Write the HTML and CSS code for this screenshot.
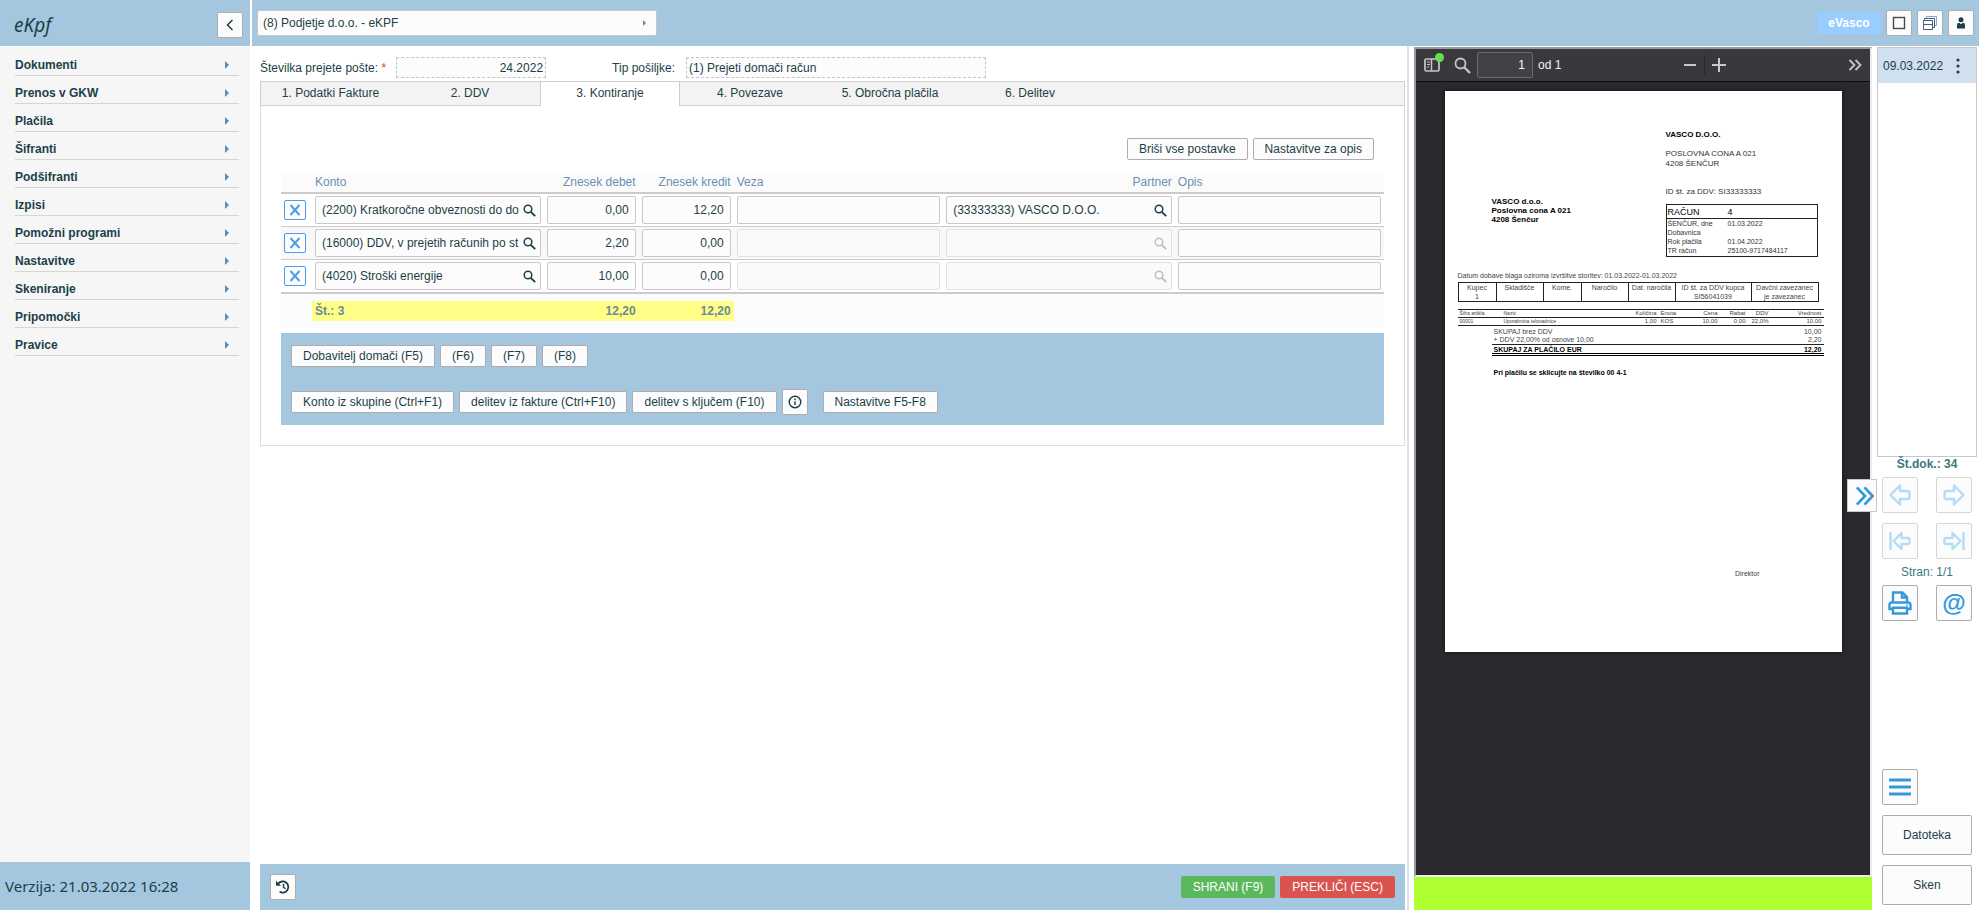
FILE: index.html
```
<!DOCTYPE html>
<html lang="sl">
<head>
<meta charset="utf-8">
<title>eKpf</title>
<link rel="stylesheet" href="styles.css">
</head>
<body>
<svg class="defs" aria-hidden="true">
  <symbol id="i-search" viewBox="0 0 13 13"><circle cx="5" cy="5" r="3.8" fill="none" stroke="currentColor" stroke-width="1.5"/><path d="M7.8 7.8L12.2 12.2" stroke="currentColor" stroke-width="1.9"/></symbol>
  <symbol id="i-x" viewBox="0 0 12 12"><path d="M1.5 1L10.500 11M10.500 1L1.500 11" fill="none" stroke="currentColor" stroke-width="1.9"/></symbol>
  <symbol id="i-tri" viewBox="0 0 4 8"><path d="M0 0L4 4L0 8Z" fill="currentColor"/></symbol>
  <symbol id="i-larrow" viewBox="0 0 24 24"><path d="M2.500 12L12 2.500V8H19.500Q21.500 8 21.500 10V14Q21.500 16 19.500 16H12V21.500Z" fill="none" stroke="currentColor" stroke-width="2.4" stroke-linejoin="round"/></symbol>
  <symbol id="i-lfirst" viewBox="0 0 24 24"><path d="M2.500 3V21M5.500 12L13.500 4V9H20Q21.500 9 21.500 10.500V13.500Q21.500 15 20 15H13.500V20Z" fill="none" stroke="currentColor" stroke-width="2.4" stroke-linejoin="round"/></symbol>
</svg>
<div class="app">
  <aside class="sidebar">
    <div class="brand">
      <span class="brand-name">eKpf</span>
      <button class="btn icon-btn" aria-label="Skrij meni"><svg width="8" height="12" viewBox="0 0 8 12"><path d="M6.500 1L1.500 6L6.500 11" fill="none" stroke="currentColor" stroke-width="1.5"/></svg></button>
    </div>
    <nav class="menu">
      <a href="#">Dokumenti<svg class="tri"><use href="#i-tri"/></svg></a>
      <a href="#">Prenos v GKW<svg class="tri"><use href="#i-tri"/></svg></a>
      <a href="#">Plačila<svg class="tri"><use href="#i-tri"/></svg></a>
      <a href="#">Šifranti<svg class="tri"><use href="#i-tri"/></svg></a>
      <a href="#">Podšifranti<svg class="tri"><use href="#i-tri"/></svg></a>
      <a href="#">Izpisi<svg class="tri"><use href="#i-tri"/></svg></a>
      <a href="#">Pomožni programi<svg class="tri"><use href="#i-tri"/></svg></a>
      <a href="#">Nastavitve<svg class="tri"><use href="#i-tri"/></svg></a>
      <a href="#">Skeniranje<svg class="tri"><use href="#i-tri"/></svg></a>
      <a href="#">Pripomočki<svg class="tri"><use href="#i-tri"/></svg></a>
      <a href="#">Pravice<svg class="tri"><use href="#i-tri"/></svg></a>
    </nav>
    <div class="version">Verzija: 21.03.2022 16:28</div>
  </aside>

  <div class="right">
    <header class="topbar">
      <div class="company">
        <select aria-label="Podjetje"><option>(8) Podjetje d.o.o. - eKPF</option></select>
        <svg class="tri small"><use href="#i-tri"/></svg>
      </div>
      <div class="top-tools">
        <button class="user-tag">eVasco</button>
        <button class="btn icon-btn" aria-label="Okno"><svg width="14" height="14" viewBox="0 0 14 14"><rect x="1.500" y="1.500" width="11" height="11" fill="none" stroke="#4c4550" stroke-width="1.4"/></svg></button>
        <button class="btn icon-btn" aria-label="Okna"><svg width="16" height="16" viewBox="0 0 16 16" fill="none" stroke="#4d5c77"><path d="M4.500 3.500V1.500H14.500V10.500H12.500" stroke="#7fa8d8"/><path d="M2.500 5.500V3.500H12.500V12.500H10.500"/><path d="M1.500 5.500H10.500V14.500H1.500ZM1.500 9.500H10.500"/></svg></button>
        <button class="btn icon-btn" aria-label="Uporabnik"><svg width="10" height="12" viewBox="0 0 10 12" fill="currentColor"><circle cx="5" cy="2.800" r="2.500"/><path d="M1 11.500V8Q1 5.800 3.200 5.800L5 7.200L6.800 5.800Q9 5.800 9 8V11.500Z"/></svg></button>
      </div>
    </header>

    <div class="work">
      <main class="content">
        <div class="form-head">
          <label for="num">Številka prejete pošte: <span class="req">*</span></label>
          <input id="num" class="ro num" value="24.2022" readonly>
          <label for="kind" class="kind-label">Tip pošiljke:</label>
          <input id="kind" class="ro kind" value="(1) Prejeti domači račun" readonly>
        </div>
        <div class="tabs" role="tablist">
          <button role="tab">1. Podatki Fakture</button>
          <button role="tab">2. DDV</button>
          <button role="tab" aria-selected="true" class="active">3. Kontiranje</button>
          <button role="tab">4. Povezave</button>
          <button role="tab">5. Obročna plačila</button>
          <button role="tab">6. Delitev</button>
          <span class="tab-rest"></span>
        </div>
        <section class="panel">
          <div class="panel-tools">
            <button class="btn">Briši vse postavke</button>
            <button class="btn">Nastavitve za opis</button>
          </div>
          <table class="postings">
            <colgroup><col class="c-del"><col class="c-wide"><col class="c-amt"><col class="c-amt"><col class="c-veza"><col class="c-wide"><col></colgroup>
            <thead><tr><th></th><th>Konto</th><th class="r">Znesek debet</th><th class="r">Znesek kredit</th><th>Veza</th><th class="r">Partner</th><th>Opis</th></tr></thead>
            <tbody>
              <tr>
                <td><button class="del" aria-label="Briši"><svg width="12" height="12"><use href="#i-x"/></svg></button></td>
                <td><div class="lookup"><input aria-label="Konto" value="(2200) Kratkoročne obveznosti do do"><svg class="mag"><use href="#i-search"/></svg></div></td>
                <td><input class="cell r" aria-label="Znesek debet" value="0,00"></td>
                <td><input class="cell r" aria-label="Znesek kredit" value="12,20"></td>
                <td><input class="cell" aria-label="Veza"></td>
                <td><div class="lookup"><input aria-label="Partner" value="(33333333) VASCO D.O.O."><svg class="mag"><use href="#i-search"/></svg></div></td>
                <td><input class="cell" aria-label="Opis"></td>
              </tr>
              <tr>
                <td><button class="del" aria-label="Briši"><svg width="12" height="12"><use href="#i-x"/></svg></button></td>
                <td><div class="lookup"><input aria-label="Konto" value="(16000) DDV, v prejetih računih po st"><svg class="mag"><use href="#i-search"/></svg></div></td>
                <td><input class="cell r" aria-label="Znesek debet" value="2,20"></td>
                <td><input class="cell r" aria-label="Znesek kredit" value="0,00"></td>
                <td><input class="cell" aria-label="Veza" disabled></td>
                <td><div class="lookup off"><input aria-label="Partner" disabled><svg class="mag"><use href="#i-search"/></svg></div></td>
                <td><input class="cell" aria-label="Opis"></td>
              </tr>
              <tr>
                <td><button class="del" aria-label="Briši"><svg width="12" height="12"><use href="#i-x"/></svg></button></td>
                <td><div class="lookup"><input aria-label="Konto" value="(4020) Stroški energije"><svg class="mag"><use href="#i-search"/></svg></div></td>
                <td><input class="cell r" aria-label="Znesek debet" value="10,00"></td>
                <td><input class="cell r" aria-label="Znesek kredit" value="0,00"></td>
                <td><input class="cell" aria-label="Veza" disabled></td>
                <td><div class="lookup off"><input aria-label="Partner" disabled><svg class="mag"><use href="#i-search"/></svg></div></td>
                <td><input class="cell" aria-label="Opis"></td>
              </tr>
            </tbody>
            <tfoot><tr><td></td><td><div class="sum">Št.: 3</div></td><td><div class="sum r">12,20</div></td><td><div class="sum r">12,20</div></td><td></td><td></td><td></td></tr></tfoot>
          </table>
          <div class="actions">
            <div class="action-row">
              <button class="btn">Dobavitelj domači (F5)</button>
              <button class="btn">(F6)</button>
              <button class="btn">(F7)</button>
              <button class="btn">(F8)</button>
            </div>
            <div class="action-row">
              <button class="btn">Konto iz skupine (Ctrl+F1)</button>
              <button class="btn">delitev iz fakture (Ctrl+F10)</button>
              <button class="btn">delitev s ključem (F10)</button>
              <button class="btn icon-btn" aria-label="Info"><svg width="14" height="14" viewBox="0 0 14 14"><circle cx="7" cy="7" r="5.800" fill="none" stroke="currentColor" stroke-width="1.400"/><path d="M7 6.200V10" stroke="currentColor" stroke-width="1.400"/><circle cx="7" cy="4.300" r="0.900" fill="currentColor"/></svg></button>
              <button class="btn f-settings">Nastavitve F5-F8</button>
            </div>
          </div>
        </section>
        <footer class="save-bar">
          <button class="btn icon-btn" aria-label="Zgodovina"><svg width="16" height="16" viewBox="0 0 16 16"><path d="M3.300 4.600A5.600 5.600 0 1 1 4.600 12.700" fill="none" stroke="currentColor" stroke-width="1.800"/><path d="M1 1.700V6.700H6Z" fill="currentColor"/><path d="M8.500 4.800V8.200L10.600 9.800" fill="none" stroke="currentColor" stroke-width="1.400"/></svg></button>
          <span class="grow"></span>
          <button class="save ok">SHRANI (F9)</button>
          <button class="save no">PREKLIČI (ESC)</button>
        </footer>
      </main>

      <section class="viewer">
        <div class="pdf">
          <div class="pdf-bar">
            <button class="side-toggle" aria-label="Stranska vrstica"><svg width="16" height="16" viewBox="0 0 16 16" fill="none" stroke="currentColor"><rect x="1" y="2" width="14" height="12" rx="1.500" stroke-width="1.700"/><path d="M7.500 2V14" stroke-width="1.500"/><path d="M3 5H6M3 7.500H6M3 10H5"/></svg><i class="dot"></i></button>
            <button aria-label="Najdi"><svg width="17" height="17" viewBox="0 0 17 17" fill="none" stroke="currentColor"><circle cx="6.500" cy="6.500" r="5" stroke-width="1.800"/><path d="M10.200 10.200L16 16" stroke-width="2.200"/></svg></button>
            <input aria-label="Stran" value="1"><span class="of">od 1</span>
            <span class="zoomers">
              <button aria-label="Pomanjšaj"><svg width="14" height="14" viewBox="0 0 14 14"><path d="M1 7H13" stroke="currentColor" stroke-width="2"/></svg></button>
              <i class="sep"></i>
              <button aria-label="Povečaj"><svg width="14" height="14" viewBox="0 0 14 14"><path d="M0 7H14M7 0V14" stroke="currentColor" stroke-width="2"/></svg></button>
            </span>
            <button class="more" aria-label="Več"><svg width="14" height="12" viewBox="0 0 14 12" fill="none" stroke="currentColor" stroke-width="1.800"><path d="M1.500 1L6.500 6L1.500 11M7.500 1L12.500 6L7.500 11"/></svg></button>
          </div>
          <div class="pdf-area">
            <article class="page">
              <div class="inv-head">
                <address class="buyer"><b>VASCO d.o.o.<br>Poslovna cona A 021<br>4208 Šenčur</b></address>
                <div class="seller">
                  <b>VASCO D.O.O.</b>
                  <p class="addr">POSLOVNA CONA A 021<br>4208 ŠENČUR</p>
                  <p class="vat">ID št. za DDV: SI33333333</p>
                  <dl class="inv-box">
                    <dt class="big">RAČUN</dt><dd class="big">4</dd>
                    <dt>ŠENČUR, dne</dt><dd>01.03.2022</dd>
                    <dt>Dobavnica</dt><dd></dd>
                    <dt>Rok plačila</dt><dd>01.04.2022</dd>
                    <dt>TR račun</dt><dd>25100-9717484117</dd>
                  </dl>
                </div>
              </div>
              <p class="supply">Datum dobave blaga oziroma izvršitve storitev: 01.03.2022-01.03.2022</p>
              <table class="info">
                <colgroup><col class="i1"><col class="i2"><col class="i1"><col class="i2"><col class="i2"><col class="i3"><col></colgroup>
                <tr><td>Kupec<br>1</td><td>Skladišče</td><td>Kome.</td><td>Naročilo</td><td>Dat. naročila</td><td>ID št. za DDV kupca<br>SI56041039</td><td>Davčni zavezanec<br>je zavezanec</td></tr>
              </table>
              <table class="items">
                <colgroup><col class="t1"><col><col class="t3"><col class="t4"><col class="t5"><col class="t6"><col class="t4"><col class="t8"></colgroup>
                <tr><td class="xs">Šifra artikla</td><td class="xs">Naziv</td><td class="r">Količina</td><td>Enota</td><td class="r">Cena</td><td class="r">Rabat</td><td class="r">DDV</td><td class="r">Vrednost</td></tr>
                <tr><td class="xs">00001</td><td class="xs">Uporabnina telovadnice</td><td class="r">1,00</td><td>KOS</td><td class="r">10,00</td><td class="r">0,00</td><td class="r">22,0%</td><td class="r">10,00</td></tr>
              </table>
              <div class="totals">
                <p><span>SKUPAJ brez DDV</span><span>10,00</span></p>
                <p><span>+ DDV 22,00% od osnove 10,00</span><span>2,20</span></p>
                <p class="grand"><span>SKUPAJ ZA PLAČILO EUR</span><span>12,20</span></p>
              </div>
              <p class="ref">Pri plačilu se sklicujte na številko 00 4-1</p>
              <p class="sign">Direktor</p>
            </article>
          </div>
        </div>
        <div class="status"></div>
      </section>

      <aside class="docs">
        <div class="doc-list"><div class="doc-row"><span>09.03.2022</span><button aria-label="Možnosti"><svg width="4" height="18" viewBox="0 0 4 18" fill="currentColor"><circle cx="2" cy="3" r="1.600"/><circle cx="2" cy="9" r="1.600"/><circle cx="2" cy="15" r="1.600"/></svg></button></div></div>
        <div class="doc-count">Št.dok.: 34</div>
        <div class="nav-grid">
          <button class="btn sq" disabled aria-label="Nazaj"><svg width="24" height="24"><use href="#i-larrow"/></svg></button>
          <button class="btn sq" disabled aria-label="Naprej"><svg class="flip" width="24" height="24"><use href="#i-larrow"/></svg></button>
          <button class="btn sq" disabled aria-label="Prvi"><svg width="24" height="24"><use href="#i-lfirst"/></svg></button>
          <button class="btn sq" disabled aria-label="Zadnji"><svg class="flip" width="24" height="24"><use href="#i-lfirst"/></svg></button>
        </div>
        <div class="doc-page">Stran: 1/1</div>
        <div class="nav-grid">
          <button class="btn sq" aria-label="Tiskaj"><svg width="24" height="24" viewBox="0 0 24 24" fill="none" stroke="currentColor" stroke-width="2.400"><path d="M5 11V1.500H14.500L19 6V11M14 1.500V6.500H19"/><path d="M5 18H1.500V14Q1.500 11.500 4 11.500H20Q22.500 11.500 22.500 14V18H19"/><path d="M5 16.800H19V22.500H5Z"/><circle cx="19" cy="14.200" r="0.500" stroke-width="1"/></svg></button>
          <button class="btn sq at" aria-label="E-pošta">@</button>
        </div>
        <button class="btn expand" aria-label="Razširi"><svg width="20" height="20" viewBox="0 0 20 20" fill="none" stroke="currentColor" stroke-width="2.800"><path d="M2 1L10.500 10L2 19M10 1L18.500 10L10 19"/></svg></button>
        <span class="grow"></span>
        <button class="btn sq" aria-label="Meni"><svg width="22" height="18" viewBox="0 0 22 18" stroke="currentColor" stroke-width="3"><path d="M0 2H22M0 9H22M0 16H22"/></svg></button>
        <button class="btn wide">Datoteka</button>
        <button class="btn wide">Sken</button>
      </aside>
    </div>
  </div>
</div>
</body>
</html>
```
FILE: styles.css
```
* { box-sizing: border-box; }
body { margin: 0; font: 12px/14px "Liberation Sans", Arial, sans-serif; color: #1c3f48; background: #fff; }
button, input, select { font: inherit; color: inherit; }
button { cursor: pointer; padding: 0; border: 0; background: none; }
p, dl, dd { margin: 0; }
svg { display: block; }
.defs { position: absolute; width: 0; height: 0; }
.grow { flex: 1; }
.r { text-align: right; }

.app { display: flex; height: 100vh; gap: 2px; }
.sidebar { flex: none; width: 250px; display: flex; flex-direction: column; background: #f6f6f6; }
.brand { height: 46px; padding: 3px 7px 0 14px; display: flex; align-items: center; justify-content: space-between; background: #a4c7df; }
.brand-name { font: italic 19px/24px "Noto Sans", sans-serif; }
.btn { display: inline-flex; align-items: center; justify-content: center; height: 22px; padding: 0 11px; background: #fcfcfc; border: 1px solid #adadad; border-radius: 2px; white-space: nowrap; }
.icon-btn { width: 26px; height: 26px; padding: 0; }
.menu { flex: 1; padding: 1px 11px 0 15px; display: flex; flex-direction: column; border-top: 1px solid #fff; }
.menu a { height: 28px; padding: 7px 10px 0 0; display: flex; align-items: center; justify-content: space-between; border-bottom: 1px solid #d6d6d6; color: inherit; text-decoration: none; font-weight: bold; }
.tri { width: 4px; height: 8px; color: #5f8ab5; flex: none; }
.tri.small { height: 6px; width: 3px; }
.version { height: 48px; padding-left: 5px; background: #a4c7df; font: 15px/48px "Noto Sans", sans-serif; }

.right { flex: 1; min-width: 0; display: flex; flex-direction: column; }
.topbar { height: 46px; padding: 0 5px; display: flex; align-items: center; justify-content: space-between; background: #a4c7df; }
.company { display: flex; align-items: center; width: 400px; height: 26px; padding-right: 10px; background: #fcfcfc; border: 1px solid #c8c8c8; border-radius: 2px; }
.company select { flex: 1; height: 24px; padding: 0 5px; border: 0; background: none; appearance: none; }
.top-tools { display: flex; align-items: center; gap: 5px; }
.user-tag { width: 64px; height: 22px; background: #99ccff; color: #fff; font-weight: bold; }

.work { flex: 1; min-height: 0; display: flex; }
.content { flex: 1145 1 0; min-width: 0; padding: 11px 2px 0 8px; display: flex; flex-direction: column; border-right: 2px solid #d3e4f0; }
.form-head { display: flex; align-items: center; height: 21px; margin-bottom: 3px; }
.req { color: #e04040; }
.ro { height: 21px; border: 1px dashed #c4c4c4; background: #fcfcfc; padding: 0 2px; }
.ro.num { width: 150px; margin-left: 10px; text-align: right; }
.kind-label { margin-left: 66px; }
.ro.kind { width: 300px; margin-left: 11px; }
.tabs { display: flex; height: 25px; border: 1px solid #cfcfcf; border-bottom: 0; background: #f3f3f3; }
.tabs button { width: 140px; padding-bottom: 2px; border-bottom: 1px solid #cfcfcf; }
.tabs button:first-child { width: 139px; }
.tabs .active { background: #fff; border: 1px solid #cfcfcf; border-width: 0 1px; }
.tab-rest { flex: 1; border-bottom: 1px solid #cfcfcf; }
.panel { padding: 32px 20px 20px; border: 1px solid #dcdcdc; border-top: 0; }
.panel-tools { display: flex; justify-content: flex-end; gap: 5px; padding: 0 10px 12px 0; }

.postings { width: 100%; table-layout: fixed; border-collapse: separate; border-spacing: 0; }
.c-del { width: 31px; }
.c-wide { width: 21%; }
.c-amt { width: 95px; }
.c-veza { width: 19%; }
.postings th { height: 22px; padding: 0 3px; background: #fbfbfb; border-bottom: 2px solid #cccccc; color: #6d8fb0; font-weight: normal; text-align: left; }
.postings th.r { text-align: right; }
.postings tbody td { height: 33px; padding: 2px 3px; border-bottom: 1px solid #cccccc; }
.postings tbody tr:nth-child(2) { background: #f8f8f8; }
.postings tbody tr:last-child td { border-bottom-width: 2px; }
.cell, .lookup { display: flex; align-items: center; width: 100%; height: 28px; padding: 0 6px; background: #fcfcfc; border: 1px solid #c8c8c8; border-radius: 2px; }
.cell:disabled, .lookup.off { border-color: #e2e2e2; background: #fafafa; }
.lookup { padding-right: 4px; }
.lookup input { flex: 1; min-width: 0; padding: 0; border: 0; background: none; }
.mag { width: 13px; height: 13px; flex: none; }
.off .mag { opacity: .3; }
.del { display: flex; align-items: center; justify-content: center; width: 22px; height: 20px; border: 1px solid #4d9ae8; border-radius: 2px; background: #fcfcfc; color: #4d9ae8; }
.postings tfoot td { height: 34px; padding: 0; background: #fcfcfc; }
.sum { height: 20px; padding: 3px; background: #ffff88; color: #6a8a98; font-weight: bold; }
.actions { margin-top: 5px; padding: 10px; display: flex; flex-direction: column; gap: 20px; background: #a4c7df; }
.action-row { display: flex; align-items: center; gap: 5px; height: 26px; }
.f-settings { margin-left: 10px; }
.save-bar { margin-top: auto; height: 46px; padding: 0 10px; display: flex; align-items: center; gap: 5px; background: #a4c7df; }
.save { height: 22px; padding: 0 12px; border-radius: 2px; color: #fff; }
.ok { background: #5cb85c; }
.no { background: #d9534f; }

.viewer { flex: 458 1 0; min-width: 0; margin: 1px 0 0 5px; display: flex; flex-direction: column; }
.pdf { flex: 1; min-height: 0; display: flex; flex-direction: column; background: #2a2a2e; border: 2px solid; border-color: #9a9a9a #ededed #ededed #9a9a9a; }
.pdf-bar { height: 33px; padding: 0 8px; display: flex; align-items: center; background: #38383d; border-bottom: 1px solid #0c0c0d; color: #c8c8ca; }
.side-toggle { position: relative; margin-right: 14px; }
.dot { position: absolute; right: -4px; top: -4px; width: 9px; height: 9px; border-radius: 50%; background: #6adb53; }
.pdf-bar input { width: 56px; height: 26px; margin-left: 6px; padding: 0 7px; border: 1px solid #6a6a6e; border-radius: 2px; background: #414146; color: #fff; text-align: right; }
.of { margin-left: 5px; color: #f4f4f4; }
.zoomers { display: flex; align-items: center; gap: 7px; margin: 0 auto; }
.sep { width: 1px; height: 20px; background: #28282b; }
.pdf-area { flex: 1; min-height: 0; padding: 9px 28px; overflow: hidden; }
.status { height: 33px; background: #adff2f; }

.page { max-width: 397px; aspect-ratio: 397 / 561; margin: 0 auto; padding: 39px 18px 0 13px; background: #fff; color: #444; font-size: 7px; line-height: 9px; box-shadow: 0 0 4px #111; }
.inv-head { display: flex; justify-content: space-between; padding-right: 6px; color: #333; font-size: 8px; }
.inv-head b { color: #000; }
.buyer { margin: 67px 0 0 34px; font-style: normal; }
.seller { width: 152px; line-height: 10px; }
.addr { margin-top: 9px; }
.vat { margin-top: 18px; }
.inv-box { margin-top: 7px; border: 1px solid #222; display: grid; grid-template-columns: 60px 1fr; font-size: 7px; line-height: 9px; padding-bottom: 1px; }
.inv-box dt, .inv-box dd { padding-left: 1px; height: 9px; }
.inv-box .big { height: 14px; font-size: 9px; line-height: 14px; border-bottom: 1px solid #222; color: #000; }
.supply { margin: 14px 0 2px; }
.info { width: 361px; max-width: 100%; table-layout: fixed; border-collapse: collapse; text-align: center; }
.info td { height: 19px; padding: 0; border: 1px solid #222; vertical-align: top; white-space: nowrap; }
.i1 { width: 38px; }
.i2 { width: 47px; }
.i3 { width: 76px; }
.items { width: 100%; margin-top: 7px; table-layout: fixed; border-collapse: collapse; border-top: 1px solid #222; font-size: 6px; line-height: 7px; }
.items tr { border-bottom: 1px solid #222; }
.items td { height: 8px; padding: 0 2px; white-space: nowrap; }
.items .xs { font-size: 5px; }
.t1 { width: 44px; }
.t3 { width: 38px; }
.t4 { width: 23px; }
.t5 { width: 38px; }
.t6 { width: 28px; }
.t8 { width: 53px; }
.totals { margin-left: 34px; line-height: 8px; padding-top: 2px; }
.totals p { display: flex; justify-content: space-between; padding: 0 2px; }
.totals .grand { padding-top: 1px; height: 12px; border-top: 1px solid #222; border-bottom: 3px double #000; color: #000; font-weight: bold; }
.ref { margin: 12px 0 0 36px; color: #000; font-weight: bold; }
.sign { margin: 192px 64px 0 0; text-align: right; }

.docs { position: relative; flex: none; width: 107px; padding: 1px 2px 5px 5px; display: flex; flex-direction: column; align-items: flex-start; }
.doc-list { width: 100%; height: 410px; border: 1px solid #c8c8c8; }
.doc-row { display: flex; align-items: center; justify-content: space-between; height: 35px; padding: 0 16px 0 5px; background: #d0e0ee; }
.doc-count, .doc-page { width: 100%; text-align: center; color: #3b7780; }
.doc-count { font-weight: bold; }
.nav-grid { display: grid; grid-template-columns: 36px 36px; gap: 10px 18px; margin: 6px 5px; }
.sq { width: 36px; height: 36px; padding: 0; color: #3498db; }
.sq:disabled { border-color: #d6d6d6; color: #b5dcf7; }
.flip { transform: scaleX(-1); }
.at { font-size: 24px; font-weight: bold; }
.expand { position: absolute; left: -25px; top: 433px; width: 30px; height: 33px; padding: 0 2px 0 7px; border-color: #c8c8c8; border-radius: 0; color: #3498db; }
.docs > .sq, .docs > .wide { flex: none; margin-left: 5px; }
.wide { width: 90px; height: 40px; margin-top: 10px; }
```
